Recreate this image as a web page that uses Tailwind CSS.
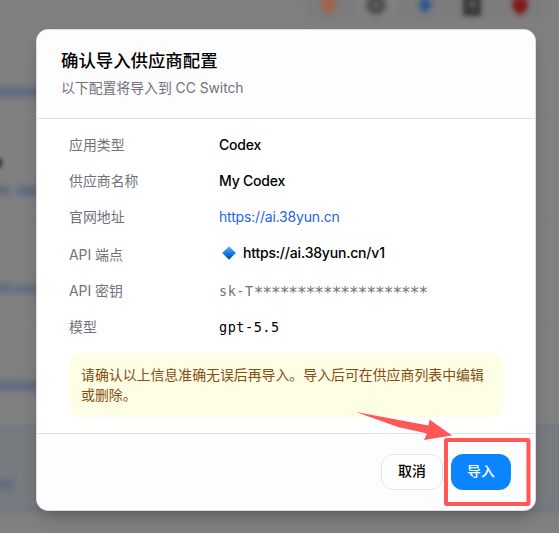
<!DOCTYPE html>
<html lang="zh-CN">
<head>
<meta charset="utf-8">
<title>CC Switch</title>
<script src="https://cdn.jsdelivr.net/npm/@tailwindcss/browser@4"></script>
</head>
<body class="relative h-[533px] w-[559px] overflow-hidden bg-[#808080] font-['Inter','Noto_Sans_CJK_SC',sans-serif] text-sm text-black">
  <!-- Blurred application behind the dialog -->
  <div class="absolute inset-0" aria-hidden="true">
    <div class="absolute left-[306px] top-[-14px] h-[36px] w-[236px] rounded-lg bg-[#7c7c7c] blur-[3px]"></div>
    <div class="absolute left-[355px] top-[-10px] h-[28px] w-[43px] rounded-lg bg-[#818181] blur-[3px]"></div>
    <svg class="absolute left-[300px] top-0 overflow-visible blur-[2.5px]" width="259" height="28" viewBox="0 0 259 28">
      <circle cx="28.500" cy="5" r="8" fill="#a0644e"/>
      <circle cx="76" cy="5" r="10" fill="#4d4d4d"/>
      <circle cx="76" cy="5" r="3" fill="#656565"/>
      <path d="M116 5L125 -4V14Z" fill="#6d7a62"/>
      <path d="M124 -4L133 5L124 14L119 5Z" fill="#2d5798"/>
      <rect x="163" y="-4" width="18" height="20" rx="2" fill="#383838"/>
      <rect x="170" y="1" width="5" height="7" fill="#666666"/>
      <path d="M212 4C212 -5 228 -5 228 4C228 9 224 13 220 15C216 13 212 9 212 4Z" fill="#801a1a"/>
    </svg>
    <div class="absolute left-[-10px] top-[87px] h-[10px] w-[56px] bg-[#5f6b80] blur-[3px]"></div>
    <div class="absolute left-[-10px] top-[158px] h-[10px] w-[12px] rounded bg-[#303030] blur-[2px]"></div>
    <div class="absolute left-[-10px] top-[186px] h-[9px] w-[20px] bg-[#5f6b80] blur-[3px]"></div>
    <div class="absolute left-[17px] top-[186px] h-[10px] w-[30px] bg-[#5f6b80] blur-[3px]"></div>
    <div class="absolute left-[-10px] top-[283px] h-[10px] w-[20px] bg-[#5f6b80] blur-[3px]"></div>
    <div class="absolute left-[13px] top-[285px] h-[8px] w-[33px] bg-[#5f6b80] blur-[3px]"></div>
    <div class="absolute left-[-10px] top-[381px] h-[10px] w-[56px] bg-[#5f6b80] blur-[3px]"></div>
    <div class="absolute inset-x-0 top-[116px] h-px bg-[#7c7c7c]"></div>
    <div class="absolute inset-x-0 top-[216px] h-px bg-[#7c7c7c]"></div>
    <div class="absolute inset-x-0 top-[324px] h-px bg-[#7c7c7c]"></div>
    <div class="absolute -inset-x-3 top-[425px] h-[87px] border-y-4 border-[#707883] bg-[#777a7f] blur-[2px]"></div>
    <div class="absolute left-[-10px] top-[480px] h-[9px] w-[23px] bg-[#5f6b80] blur-[3px]"></div>
  </div>

  <main class="relative ml-9 mt-[29px] flex h-[482px] w-[500px] flex-col overflow-hidden rounded-xl border border-[#dedee0] bg-white shadow-[0_8px_16px_-4px_rgba(0,0,0,0.3)]">
    <header class="h-[89px] shrink-0 border-b border-[#e2e2e4] bg-[#fdfdfd] pl-6 pt-[20px]">
      <h1 class="text-[17.4px] leading-[22px] font-medium">确认导入供应商配置</h1>
      <p class="mt-[6px] text-[13.9px] leading-5 tracking-[-0.05px] text-[#71717a]">以下配置将导入到 CC Switch</p>
    </header>

    <section class="h-[314px] shrink-0 px-8 pt-4">
      <dl class="grid grid-cols-[150px_1fr] gap-y-4 leading-5">
        <dt class="text-[13.9px] text-[#71717a]">应用类型</dt>
        <dd class="font-medium tracking-[-0.18px]">Codex</dd>
        <dt class="text-[13.9px] text-[#71717a]">供应商名称</dt>
        <dd class="font-medium tracking-[-0.22px]">My Codex</dd>
        <dt class="text-[13.9px] text-[#71717a]">官网地址</dt>
        <dd class="tracking-[-0.18px] text-[#2563eb]">https://ai.38yun.cn</dd>
        <dt class="h-[22px] pt-0.5 text-[13.9px] text-[#71717a]">API 端点</dt>
        <dd class="flex h-5 items-center font-medium tracking-[-0.19px]">
          <svg class="ml-[3px] mr-[7px]" width="14" height="14" viewBox="0 0 14 14">
            <defs><linearGradient id="gem" x2="0" y2="1"><stop stop-color="#63b5fa"/><stop offset=".48" stop-color="#1c7fe4"/><stop offset="1" stop-color="#003eaa"/></linearGradient></defs>
            <path d="M7 .2L13.8 7L7 13.8L.2 7Z" fill="url(#gem)"/>
          </svg>https://ai.38yun.cn/v1
        </dd>
        <dt class="text-[13.9px] text-[#71717a]">API 密钥</dt>
        <dd class="h-5 whitespace-nowrap font-['DejaVu_Sans_Mono',monospace] text-[13.5px] tracking-[0.54px] text-[#71717a]">sk-T<span class="relative top-[2px] text-[16px] leading-none tracking-[-0.963px]">********************</span></dd>
        <dt class="text-[13.9px] text-[#71717a]">模型</dt>
        <dd class="font-['DejaVu_Sans_Mono',monospace] text-[13.5px] tracking-[0.54px]">gpt-5.5</dd>
      </dl>
      <p class="mt-4 h-[64px] w-[434px] whitespace-nowrap rounded-xl bg-[#fefde6] px-3 py-3 text-[13.9px] leading-5 text-[#854d0e]">请确认以上信息准确无误后再导入。导入后可在供应商列表中编辑<br>或删除。</p>
    </section>

    <footer class="flex flex-1 items-center justify-end gap-2 border-t border-[#e2e2e4] bg-[#fdfdfd] pr-6 pb-px">
      <button class="h-9 w-[62px] rounded-xl border border-[#e4e4e7] bg-white text-[13.9px] font-medium">取消</button>
      <button class="h-9 w-[60px] rounded-xl bg-[#0a84ff] text-[13.9px] font-medium text-white">导入</button>
    </footer>
  </main>

  <!-- Annotation pointing at the import button -->
  <svg class="absolute inset-0" width="559" height="533" viewBox="0 0 559 533">
    <path d="M356 412L428.500 425.500L429.500 419.500L452 435.500L424 440L427 433.500L398 427Z" fill="#ff5656"/>
    <rect x="446" y="440" width="82.500" height="64" rx="1" fill="none" stroke="#ff5656" stroke-width="4"/>
  </svg>
</body>
</html>
